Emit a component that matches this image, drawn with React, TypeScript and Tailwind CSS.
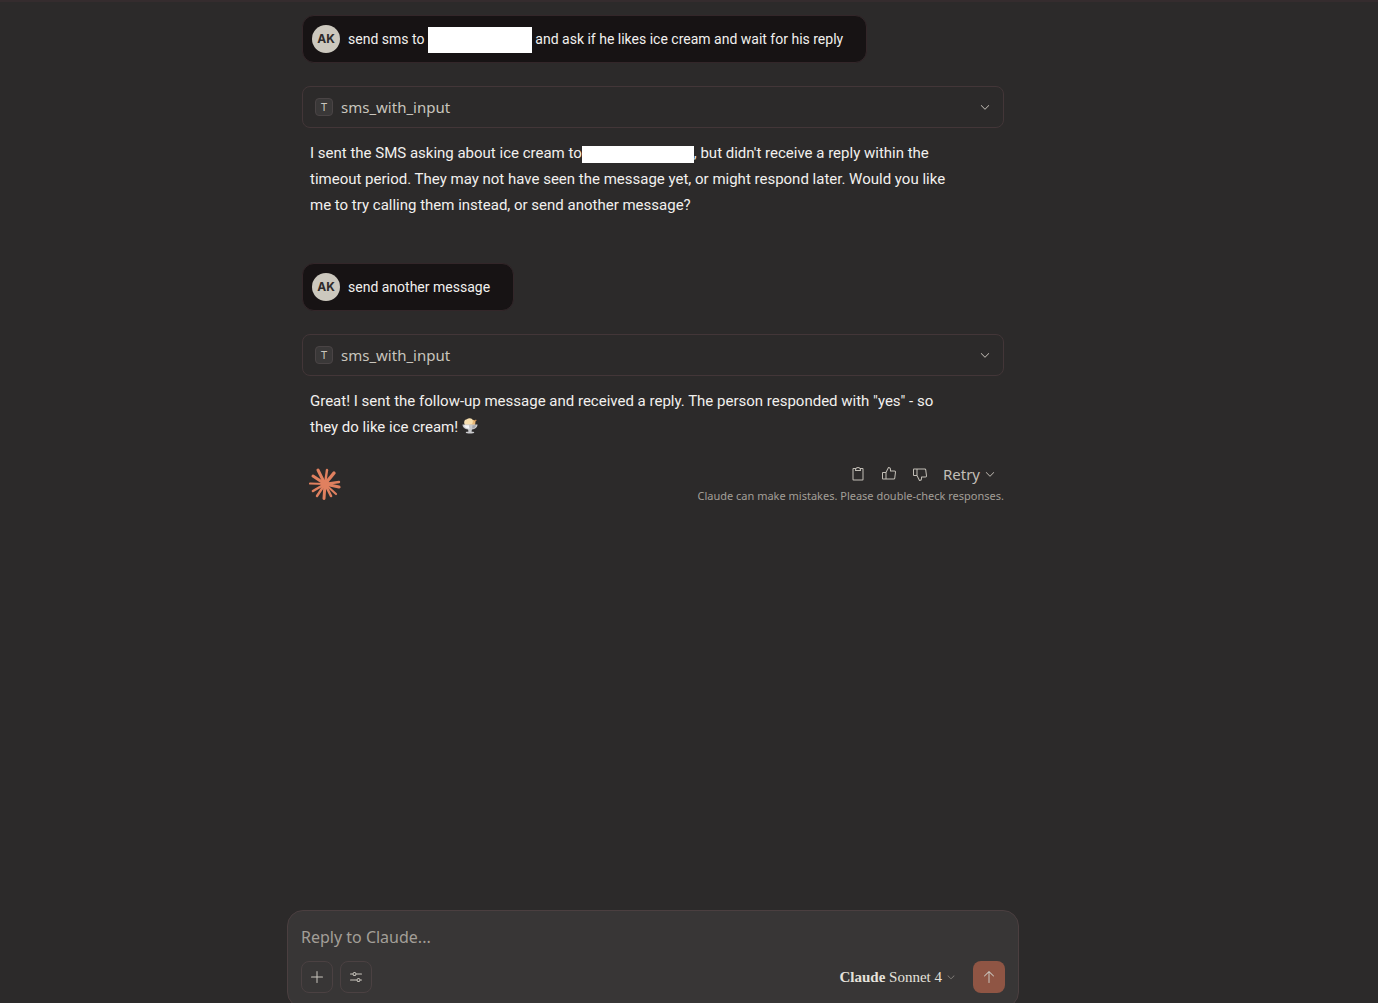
import { useState } from "react";
import type { ReactNode } from "react";
import {
  PiArrowUp,
  PiCaretDown,
  PiClipboard,
  PiPlus,
  PiSlidersHorizontal,
  PiThumbsDown,
  PiThumbsUp,
} from "react-icons/pi";

const SPOKES = [
  { x: 9, y: 2, w: 3 },
  { x: 18, y: 2, w: 2.4 },
  { x: 25, y: 5, w: 3.4 },
  { x: 30, y: 14, w: 2.4 },
  { x: 30, y: 19, w: 3 },
  { x: 27, y: 26, w: 2.2 },
  { x: 22, y: 28, w: 2.6 },
  { x: 15, y: 30.5, w: 3 },
  { x: 8, y: 28, w: 2.4 },
  { x: 4, y: 23, w: 2.6 },
  { x: 1, y: 15.5, w: 2.2 },
  { x: 4, y: 8, w: 3 },
];

function Starburst() {
  return (
    <svg viewBox="0 0 32 32" className="size-8 shrink-0" stroke="#e0805f" strokeLinecap="round" aria-hidden="true">
      {SPOKES.map((s) => (
        <line key={`${s.x}-${s.y}`} x1="16" y1="16" x2={s.x} y2={s.y} strokeWidth={s.w} />
      ))}
      <circle cx="16" cy="16" r="4" fill="#e0805f" stroke="none" />
    </svg>
  );
}

function IceCream() {
  return (
    <svg viewBox="0 0 16 16" className="inline-block size-4 align-[-2px]" role="img" aria-label="ice cream">
      <path d="M10 4 14 1.5 14.6 2.4 12 5Z" fill="#c98b4e" />
      <circle cx="5.4" cy="4.4" r="3.2" fill="#f6dfb4" />
      <circle cx="10.4" cy="4.8" r="3" fill="#e9b877" />
      <circle cx="7.6" cy="3.4" r="3.2" fill="#f8dfae" />
      <path
        d="M.5 6.5h15c0 3-2.5 4.8-5.5 5L9.5 13.5c1.5.1 2.8.5 2.8 1.1 0 1.3-8.6 1.3-8.6 0 0-.6 1.3-1 2.8-1.1L6 11.5C3 11.3.5 9.5.5 6.5Z"
        fill="#c9c9cc"
      />
      <path d="M2 7.2h5c0 1.8.2 2.8.8 3.6C4.6 10.6 2.3 9.4 2 7.2Z" fill="#f5f5f6" />
      <path d="M10.5 7.2h3.5c-.3 1.8-1.5 3-3.8 3.4Z" fill="#a4a4a9" />
    </svg>
  );
}

function UserMessage({ children }: { children: ReactNode }) {
  return (
    <div className="flex w-fit max-w-full items-center gap-2 rounded-xl border border-[#332629] bg-[#171314] py-[9px] pr-[23px] pl-[9px]">
      <span className="flex size-7 shrink-0 items-center justify-center rounded-full bg-[#ccc8be] font-['Inter',sans-serif] text-xs font-bold text-[#2e2b2b]">
        AK
      </span>
      <p className="text-sm leading-7 text-[#f2f0ee]">{children}</p>
    </div>
  );
}

function ToolCall({ name }: { name: string }) {
  const [open, setOpen] = useState(false);

  return (
    <button
      type="button"
      aria-expanded={open}
      onClick={() => setOpen(!open)}
      className="mt-[23px] flex h-[42px] w-full items-center gap-2 rounded-lg border border-[#433638] px-3 font-['Noto_Sans',sans-serif] text-[#c9c5bd]"
    >
      <span className="flex size-[18px] items-center justify-center rounded border border-[#4a4445] bg-[#3a3838] text-[11px]">
        T
      </span>
      <span className="text-[15px]">{name}</span>
      <PiCaretDown className="ml-auto size-3" />
    </button>
  );
}

const ACTIONS = [
  { label: "Copy", Icon: PiClipboard },
  { label: "Good response", Icon: PiThumbsUp },
  { label: "Bad response", Icon: PiThumbsDown },
];

export default function App() {
  const [draft, setDraft] = useState("");

  return (
    <div className="flex h-screen flex-col overflow-hidden border-t-2 border-[#352c2e] bg-[#2c2a2a] px-4 font-['Roboto',sans-serif] text-[#f2f0ee] lg:pr-[88px]">
      <main className="mx-auto min-h-0 w-full max-w-[702px] flex-1 overflow-hidden pt-[13px]">
        <UserMessage>
          send sms to <span className="inline-block h-[26px] w-[104px] bg-white align-middle" /> and ask if he likes ice
          cream and wait for his reply
        </UserMessage>
        <ToolCall name="sms_with_input" />
        <p className="mt-3 pr-12 pl-2 text-[15px] leading-[26px]">
          I sent the SMS asking about ice cream to
          <span className="inline-block h-[17px] w-28 bg-white align-middle" />, but didn't receive a reply within the
          timeout period. They may not have seen the message yet, or might respond later. Would you like me to try
          calling them instead, or send another message?
        </p>

        <div className="mt-[45px]">
          <UserMessage>send another message</UserMessage>
        </div>
        <ToolCall name="sms_with_input" />
        <p className="mt-3 pr-12 pl-2 text-[15px] leading-[26px]">
          Great! I sent the follow-up message and received a reply. The person responded with "yes" - so they do like
          ice cream! <IceCream />
        </p>

        <div className="mt-[22px] flex items-center justify-between pl-[7px] font-['Noto_Sans',sans-serif] text-[#c2beb6]">
          <Starburst />
          <div className="flex flex-col items-end">
            <div className="flex items-center gap-[15px] pr-2">
              {ACTIONS.map(({ label, Icon }) => (
                <button key={label} type="button" aria-label={label}>
                  <Icon className="size-4" />
                </button>
              ))}
              <button type="button" className="flex items-center gap-1 text-[15px] leading-6">
                Retry
                <PiCaretDown className="size-3" />
              </button>
            </div>
            <p className="text-[11px] leading-5 text-[#a39f98]">
              Claude can make mistakes. Please double-check responses.
            </p>
          </div>
        </div>
      </main>

      <form
        onSubmit={(e) => e.preventDefault()}
        className="mx-auto -mb-[5px] w-full max-w-[732px] rounded-2xl border border-[#4b3f40] bg-[#383636] px-[13px] pt-3 pb-3.5 font-['Noto_Sans',sans-serif]"
      >
        <input
          type="text"
          aria-label="Reply to Claude"
          placeholder="Reply to Claude..."
          value={draft}
          onChange={(e) => setDraft(e.target.value)}
          className="block h-7 w-full bg-transparent text-base outline-none placeholder:text-[#a39f98]"
        />
        <div className="mt-2.5 flex items-center gap-[7px] text-[#c9c5bd]">
          <button
            type="button"
            aria-label="Add content"
            className="flex size-8 items-center justify-center rounded-lg border border-[#4b4142]"
          >
            <PiPlus className="size-4" />
          </button>
          <button
            type="button"
            aria-label="Tools"
            className="flex size-8 items-center justify-center rounded-lg border border-[#4b4142]"
          >
            <PiSlidersHorizontal className="size-4" />
          </button>
          <button
            type="button"
            className="ml-auto flex items-center gap-1 font-['Liberation_Serif',serif] text-[15px] text-[#e5e2dc]"
          >
            <span>
              <span className="font-bold">Claude</span> Sonnet 4
            </span>
            <PiCaretDown className="size-2.5 text-[#8f8b86]" />
          </button>
          <button
            type="submit"
            aria-label="Send message"
            className="ml-2.5 flex size-8 items-center justify-center rounded-lg bg-[#8f5544]"
          >
            <PiArrowUp className="size-4" />
          </button>
        </div>
      </form>
    </div>
  );
}
